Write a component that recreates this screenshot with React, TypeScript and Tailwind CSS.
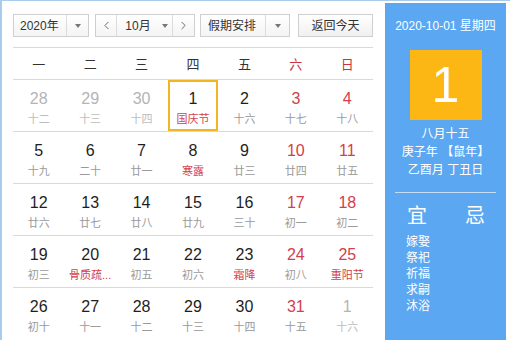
import { ChevronLeft, ChevronRight } from "lucide-react";

type Day = {
  day: number;
  lunar: string;
  muted?: boolean;
  weekend?: boolean;
  festival?: boolean;
  selected?: boolean;
};

const weeks: Day[][] = [
  [
    { day: 28, lunar: "十二", muted: true },
    { day: 29, lunar: "十三", muted: true },
    { day: 30, lunar: "十四", muted: true },
    { day: 1, lunar: "国庆节", festival: true, selected: true },
    { day: 2, lunar: "十六" },
    { day: 3, lunar: "十七", weekend: true },
    { day: 4, lunar: "十八", weekend: true },
  ],
  [
    { day: 5, lunar: "十九" },
    { day: 6, lunar: "二十" },
    { day: 7, lunar: "廿一" },
    { day: 8, lunar: "寒露", festival: true },
    { day: 9, lunar: "廿三" },
    { day: 10, lunar: "廿四", weekend: true },
    { day: 11, lunar: "廿五", weekend: true },
  ],
  [
    { day: 12, lunar: "廿六" },
    { day: 13, lunar: "廿七" },
    { day: 14, lunar: "廿八" },
    { day: 15, lunar: "廿九" },
    { day: 16, lunar: "三十" },
    { day: 17, lunar: "初一", weekend: true },
    { day: 18, lunar: "初二", weekend: true },
  ],
  [
    { day: 19, lunar: "初三" },
    { day: 20, lunar: "骨质疏...", festival: true },
    { day: 21, lunar: "初五" },
    { day: 22, lunar: "初六" },
    { day: 23, lunar: "霜降", festival: true },
    { day: 24, lunar: "初八", weekend: true },
    { day: 25, lunar: "重阳节", weekend: true, festival: true },
  ],
  [
    { day: 26, lunar: "初十" },
    { day: 27, lunar: "十一" },
    { day: 28, lunar: "十二" },
    { day: 29, lunar: "十三" },
    { day: 30, lunar: "十四" },
    { day: 31, lunar: "十五", weekend: true },
    { day: 1, lunar: "十六", muted: true },
  ],
];

const weekdays = ["一", "二", "三", "四", "五", "六", "日"];
const suitable = ["嫁娶", "祭祀", "祈福", "求嗣", "沐浴"];

function Caret() {
  return (
    <span className="h-0 w-0 border-x-[3.5px] border-t-[4px] border-x-transparent border-t-[#777]" />
  );
}

function DayCell({ d }: { d: Day }) {
  const numberColor = d.muted
    ? "text-[#b4b4b4]"
    : d.weekend
      ? "text-[#d2404c]"
      : "text-[#1e1e1e]";
  const lunarColor = d.muted
    ? "text-[#bdbdbd]"
    : d.festival
      ? "text-[#d2404c]"
      : "text-[#9a9a9a]";

  return (
    <div className="flex h-full items-stretch px-[1px]">
      <div
        className={
          d.selected
            ? "flex w-full flex-col items-center border-2 border-[#f3b61f] pt-[7px]"
            : "flex w-full flex-col items-center pt-[9px]"
        }
      >
        <span className={`text-[16px] leading-[20px] ${numberColor}`}>
          {d.day}
        </span>
        <span
          className={`mt-[3px] whitespace-nowrap text-[11px] leading-[14px] ${lunarColor}`}
        >
          {d.lunar}
        </span>
      </div>
    </div>
  );
}

export default function App() {
  return (
    <div
      className="flex h-[340px] w-[510px] overflow-hidden border-l-2 border-t border-[#a9cbec] bg-white pr-[4px]"
      style={{ fontFamily: '"Liberation Sans", "Noto Sans CJK SC", sans-serif' }}
    >
      <div className="flex w-[383px] flex-col pl-[11px] pt-[13px]">
        <div className="flex h-[24px] items-stretch text-[12px] text-[#333]">
          <div className="flex w-[76px] items-stretch border border-[#cfcfcf] bg-gradient-to-b from-white to-[#f4f4f4]">
            <span className="flex flex-1 items-center pl-[6px]">2020年</span>
            <span className="flex w-[22px] items-center justify-center border-l border-[#dcdcdc]">
              <Caret />
            </span>
          </div>

          <div className="ml-[6px] flex w-[100px] items-stretch border border-[#cfcfcf] bg-gradient-to-b from-white to-[#f4f4f4]">
            <span className="flex w-[21px] items-center justify-center border-r border-[#dcdcdc] text-[#555]">
              <ChevronLeft className="size-[13px]" strokeWidth={1.6} />
            </span>
            <span className="flex flex-1 items-center justify-center gap-[11px] pl-[4px]">
              10月
              <Caret />
            </span>
            <span className="flex w-[22px] items-center justify-center border-l border-[#dcdcdc] text-[#555]">
              <ChevronRight className="size-[13px]" strokeWidth={1.6} />
            </span>
          </div>

          <div className="ml-[5px] flex w-[90px] items-stretch border border-[#cfcfcf] bg-gradient-to-b from-white to-[#f4f4f4]">
            <span className="flex flex-1 items-center pl-[7px]">假期安排</span>
            <span className="flex w-[24px] items-center justify-center border-l border-[#dcdcdc]">
              <Caret />
            </span>
          </div>

          <div className="ml-[8px] flex w-[75px] items-center justify-center border border-[#cfcfcf] bg-gradient-to-b from-white to-[#f0f0f0]">
            返回今天
          </div>
        </div>

        <div className="mt-[10px] w-[360px] border-t border-[#d9d9d9]">
          <div className="grid h-[32px] grid-cols-7 border-b border-[#d9d9d9] text-[13px]">
            {weekdays.map((w, i) => (
              <span
                key={w}
                className={
                  i > 4
                    ? "flex items-center justify-center pt-[2px] text-[#c7343f]"
                    : "flex items-center justify-center pt-[2px] text-[#333]"
                }
              >
                {w}
              </span>
            ))}
          </div>

          {weeks.map((week, i) => (
            <div
              key={i}
              className={
                i < weeks.length - 1
                  ? "grid h-[52px] grid-cols-7 border-b border-[#d9d9d9]"
                  : "grid h-[52px] grid-cols-7"
              }
            >
              {week.map((d, j) => (
                <DayCell key={j} d={d} />
              ))}
            </div>
          ))}
        </div>
      </div>

      <div className="mt-[2px] flex w-[121px] flex-col bg-[#5ca7f1] text-white">
        <div className="pt-[15px] text-center text-[12px] leading-[16px]">
          2020-10-01 星期四
        </div>
        <div className="mx-auto mt-[16px] flex h-[70px] w-[72px] items-center justify-center bg-[#fdb714] text-[50px] leading-none">
          1
        </div>
        <div className="mt-[5px] flex flex-col items-center text-[12px] leading-[18px]">
          <span>八月十五</span>
          <span>庚子年 【鼠年】</span>
          <span>乙酉月 丁丑日</span>
        </div>
        <div className="mx-[10px] mt-[13px] border-t border-[#c4defa]" />
        <div className="mt-[11px] flex pl-[22px] text-[20px] leading-[24px]">
          <span>宜</span>
          <span className="ml-[38px]">忌</span>
        </div>
        <div className="mt-[6px] flex flex-col pl-[21px] text-[12px] leading-[16px]">
          {suitable.map((s) => (
            <span key={s}>{s}</span>
          ))}
        </div>
      </div>
    </div>
  );
}
